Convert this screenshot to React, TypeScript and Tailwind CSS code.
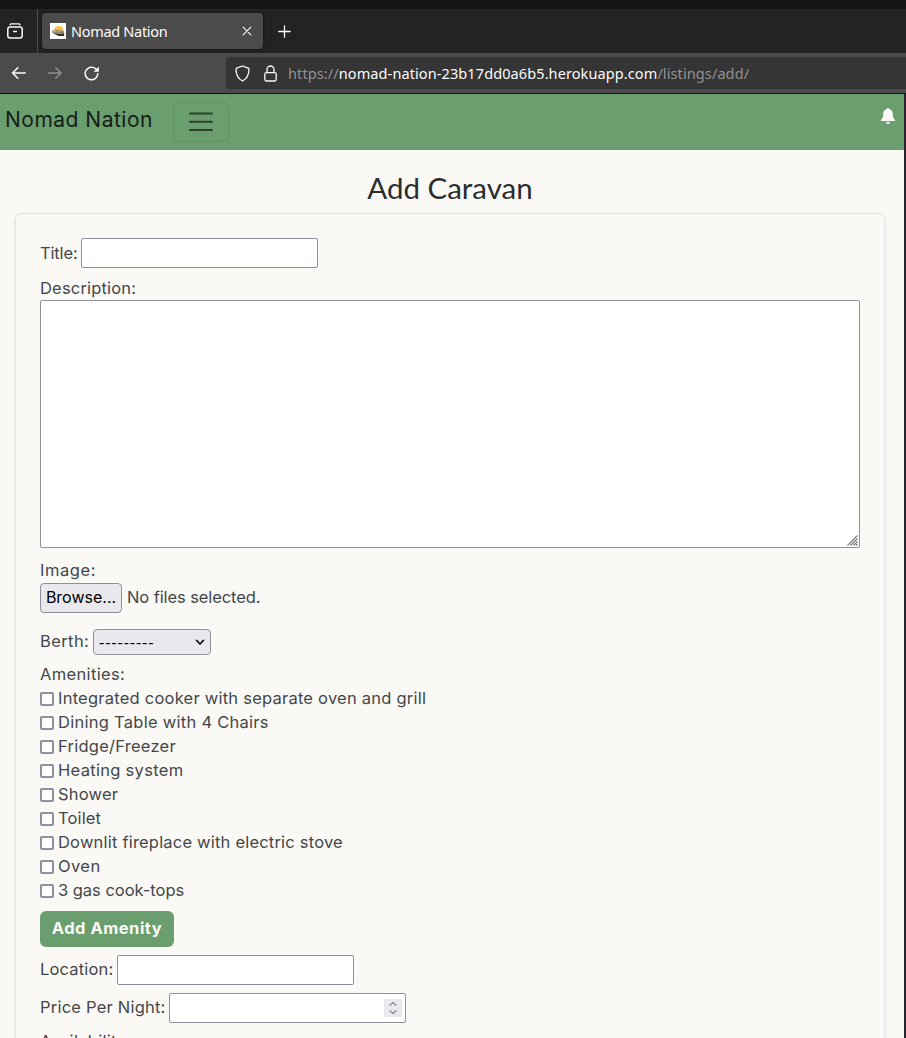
import type { ReactNode } from "react";

const amenities: { name: string; tracking: string }[] = [
  { name: "Integrated cooker with separate oven and grill", tracking: "tracking-[0.23px]" },
  { name: "Dining Table with 4 Chairs", tracking: "tracking-[0.27px]" },
  { name: "Fridge/Freezer", tracking: "tracking-[0.25px]" },
  { name: "Heating system", tracking: "tracking-[0.3px]" },
  { name: "Shower", tracking: "tracking-[0.22px]" },
  { name: "Toilet", tracking: "tracking-[0.15px]" },
  { name: "Downlit fireplace with electric stove", tracking: "tracking-[0.2px]" },
  { name: "Oven", tracking: "tracking-[0.4px]" },
  { name: "3 gas cook-tops", tracking: "tracking-[-0.03px]" },
];

function Favicon() {
  return (
    <svg width="16" height="16" viewBox="0 0 16 16" className="block shrink-0">
      <rect width="16" height="16" fill="#fff" />
      <path d="M4 8a4.300 4.800 0 0 1 9.500 0z" fill="#f8c04c" />
      <path d="M1.800 7.700 6 7.200l6.500.3 1.700 1.300-.2 2.700-5 .8-5.200-1.500-1.400-1z" fill="#85816c" />
      <path d="M3 8.300h2.700v.9H3zM7 8.400h4.500v.9H7z" fill="#d0ccb0" />
      <path d="m3.500 10.200 5 1.100 5.800-.6-.3 2.200H8.500z" fill="#33322d" />
    </svg>
  );
}

function BrowserChrome() {
  return (
    <header className="flex shrink-0 flex-col font-['Noto_Sans',sans-serif] text-[#fbfbfe]">
      <div className="h-[9px] bg-[#141414]" />
      <div className="flex h-11 items-center bg-[#232323]">
        <div className="flex h-11 w-[38px] items-center border-r border-[#4b4b4b] pl-[7px]">
          <svg width="16" height="16" viewBox="0 0 16 16" fill="none" stroke="currentColor" strokeWidth="1.5" strokeLinecap="round">
            <path d="M3 1.800 3.800.8h8.400L13 1.800" strokeWidth="1.3" strokeLinejoin="round" />
            <rect x=".8" y="4" width="14.400" height="11" rx="2.200" />
            <path d="M6.600 8.500h2.800" />
          </svg>
        </div>
        <div className="ml-1 flex h-9 w-[221px] items-center rounded-[4px] bg-[#4b4b4b] pl-2 pr-[11px] shadow-[0_0_3px_rgba(0,0,0,0.5)]">
          <Favicon />
          <span className="ml-[5px] flex-1 whitespace-nowrap text-[14.5px] leading-5 tracking-[-0.3px]">Nomad Nation</span>
          <svg width="10" height="10" viewBox="0 0 10 10" stroke="currentColor" strokeWidth="1.1" strokeLinecap="round">
            <path d="m1.200 1.200 7.600 7.600M8.800 1.200 1.200 8.800" />
          </svg>
        </div>
        <svg className="ml-[15px]" width="13" height="13" viewBox="0 0 13 13" stroke="currentColor" strokeWidth="1.3" strokeLinecap="round">
          <path d="M6.500 .8v11.400M.8 6.500h11.400" />
        </svg>
      </div>
      <div className="flex h-10 items-center bg-[#4b4b4b] pl-[11px]">
        <svg width="15" height="14" viewBox="0 0 15 14" fill="none" stroke="currentColor" strokeWidth="1.5" strokeLinecap="round" strokeLinejoin="round">
          <path d="M14.300 7H1.500M6.800 1.700 1.500 7l5.300 5.300" />
        </svg>
        <svg className="ml-[21px] text-[#8f8f91]" width="15" height="14" viewBox="0 0 15 14" fill="none" stroke="currentColor" strokeWidth="1.5" strokeLinecap="round" strokeLinejoin="round">
          <path d="M1.300 7H14M8.700 1.700 14 7l-5.300 5.300" />
        </svg>
        <svg className="ml-[21.500px]" width="15" height="15" viewBox="0 0 15 15" fill="none" stroke="currentColor" strokeWidth="1.500" strokeLinecap="round">
          <path d="M13.800 7.800A6.300 6.300 0 1 1 11.800 2.900" />
          <path d="M14.800.6v5.200H9.600z" fill="currentColor" stroke="none" />
        </svg>
        <div className="ml-[127.500px] flex h-8 flex-1 items-center rounded-l-[4px] bg-[#353535] pl-[8.500px]">
          <svg width="15" height="17" viewBox="0 0 15 17" fill="none" stroke="currentColor" strokeWidth="1.300" strokeLinejoin="round">
            <path d="M7.500 1 13.300 3.200Q14 3.500 14 4.300C14 9 12.500 13.500 7.500 16 2.500 13.500 1 9 1 4.300 1 3.500 1.700 3.200 1.700 3.200z" />
          </svg>
          <svg className="ml-[14px]" width="13" height="17" viewBox="0 0 13 17" fill="none" stroke="currentColor" strokeWidth="1.300">
            <rect x=".8" y="7.700" width="11.400" height="8.300" rx="1.500" />
            <path d="M3 7.500V4.500a3.500 3.500 0 0 1 7 0v3" />
          </svg>
          <span className="ml-[11.500px] whitespace-nowrap text-[14.5px] leading-5 tracking-[0.1px] text-[#929294]">
            https://<span className="text-[#fbfbfe]">nomad-nation-23b17dd0a6b5.herokuapp.com</span>/listings/add/
          </span>
        </div>
      </div>
      <div className="h-px bg-[#111]" />
    </header>
  );
}

function Navbar() {
  return (
    <nav className="flex h-14 shrink-0 items-start bg-[#6a9e6f] pl-[5px] pr-2">
      <a className="mt-[11px] w-[168px] whitespace-nowrap text-[21px] leading-[30px] tracking-[0.5px] text-[#161d17]">Nomad Nation</a>
      <button className="mt-2 flex h-10 w-14 items-center justify-center rounded-md border border-[#609065]" aria-label="Menu">
        <svg width="24" height="20" viewBox="0 0 24 20" stroke="#2b422d" strokeWidth="1.900" strokeLinecap="round">
          <path d="M.9 1.500h22.200M.9 9.800h22.200M.9 18h22.200" />
        </svg>
      </button>
      <svg className="ml-auto mt-[14px]" width="16" height="16" viewBox="0 0 16 16" fill="#fbfaf6">
        <path d="M8 0c.7 0 1.100.4 1.100 1 2.300.5 3.700 2.400 3.700 4.900 0 3.200.8 4.600 2.200 5.800.5.500.2 1.300-.5 1.300h-13C.8 13 .5 12.200 1 11.700c1.400-1.200 2.200-2.600 2.200-5.800C3.200 3.400 4.600 1.500 6.900 1c0-.6.4-1 1.100-1zM6 14h4a2 2 0 0 1-4 0z" />
      </svg>
    </nav>
  );
}

const inputBox = "h-[30px] w-[237px] shrink-0 rounded-[2px] border border-[#8f8f9d] bg-white";

function Field({ label, labelClass, children }: { label: string; labelClass: string; children: ReactNode }) {
  return (
    <div className="flex items-center">
      <label className={"shrink-0 whitespace-nowrap " + labelClass}>{label}</label>
      {children}
    </div>
  );
}

function ListingForm() {
  return (
    <form className="mx-[15px] mr-[19px] h-[1000px] shrink-0 rounded-md border border-[#dee2e6] px-6 pt-6 text-[16.5px] leading-6 text-[#43474b] shadow-[0_2px_4px_rgba(0,0,0,0.075)]">
      <Field label="Title:" labelClass="w-[41px] tracking-[-0.15px]">
        <input className={inputBox} />
      </Field>
      <div className="mt-2 tracking-[0.18px]">Description:</div>
      <div className="flex h-[248px] items-end justify-end rounded-[2px] border border-[#8f8f9d] bg-white p-px">
        <svg width="11" height="11" viewBox="0 0 11 11" stroke="#77777d" strokeWidth="1.100">
          <path d="M.5 10.500l10-10M3.500 10.500l7-7M6.500 10.500l4-4M9 10.500l1.500-1.500" />
        </svg>
      </div>
      <div className="mt-[10px] tracking-[0.55px]">Image:</div>
      <div className="mt-px flex items-center">
        <button type="button" className="h-[30px] w-[82px] whitespace-nowrap rounded-[4px] border border-[#8f8f9d] bg-[#e9e9ed] pb-0.5 text-[16px] text-black">Browse...</button>
        <span className="ml-[5px] pb-0.5 tracking-[-0.1px]">No files selected.</span>
      </div>
      <div className="mt-4">
        <Field label="Berth:" labelClass="w-[53px] pb-0.5 tracking-[0.4px]">
          <div className="flex h-[26px] w-[118px] items-center justify-between rounded-[4px] border border-[#8f8f9d] bg-[#e9e9ed] pl-[5px] pr-[5px] text-black">
            <span className="font-['Open_Sans',sans-serif] tracking-[0.85px]">---------</span>
            <svg width="10" height="7" viewBox="0 0 10 7" fill="none" stroke="#000" strokeWidth="1.600" strokeLinecap="round" strokeLinejoin="round">
              <path d="m1.500 1.300 3.500 3.700 3.500-3.700" />
            </svg>
          </div>
        </Field>
      </div>
      <div className="mt-[7px] tracking-[0.35px]">Amenities:</div>
      <ul>
        {amenities.map((a) => (
          <li key={a.name} className="flex h-6 items-center">
            <span className="mr-1 mt-px size-[14px] shrink-0 rounded-[2px] border-2 border-[#8f8f9d] bg-white" />
            <span className={"whitespace-nowrap " + a.tracking}>{a.name}</span>
          </li>
        ))}
      </ul>
      <button type="button" className="mt-[9px] block h-9 w-[134px] whitespace-nowrap rounded-md bg-[#6a9e6f] pb-0.5 text-[16.5px] font-bold leading-6 tracking-[0.5px] text-[#fbfaf6]">
        Add Amenity
      </button>
      <div className="mt-2">
        <Field label="Location:" labelClass="w-[77px] pb-0.5 tracking-[0.17px]">
          <input className={inputBox} />
        </Field>
      </div>
      <div className="mt-2">
        <Field label="Price Per Night:" labelClass="w-[129px] pb-0.5 tracking-[0.22px]">
          <div className={inputBox + " flex items-center justify-end pr-[3px]"}>
            <span className="flex h-[18px] w-[18px] items-center justify-center bg-[#e9e9ed]">
              <svg width="8" height="14" viewBox="0 0 8 14" fill="none" stroke="#8f8f98" strokeWidth="1.400" strokeLinecap="round" strokeLinejoin="round">
                <path d="M1 4.300 4 1.500l3 2.800M1 9.700l3 2.800 3-2.800" />
              </svg>
            </span>
          </div>
        </Field>
      </div>
      <div className="mt-[6px] tracking-[0.3px]">Availability:</div>
    </form>
  );
}

export default function App() {
  return (
    <div className="flex h-[1038px] w-[906px] flex-col overflow-hidden">
      <BrowserChrome />
      <main className="flex min-h-0 flex-1 flex-col overflow-hidden border-r-2 border-[#25252b] bg-[#faf9f5] font-['Inter',sans-serif]">
        <Navbar />
        <h1 className="mb-[9px] mt-[21px] w-[900px] text-center font-['Lato',sans-serif] text-[29.5px] leading-[33px] font-normal text-[#2b2e31]">Add Caravan</h1>
        <ListingForm />
      </main>
    </div>
  );
}
